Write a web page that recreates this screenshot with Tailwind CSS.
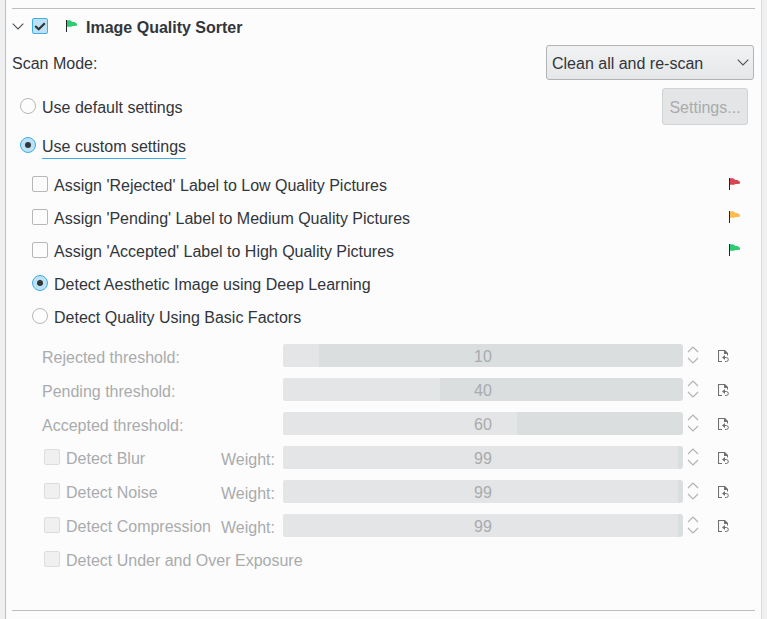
<!DOCTYPE html>
<html lang="en">
<head>
<meta charset="utf-8">
<title>Image Quality Sorter</title>
<script src="https://cdn.jsdelivr.net/npm/@tailwindcss/browser@4"></script>
</head>
<body class="h-[619px] w-[767px] overflow-hidden bg-[#eff0f1] pl-[5px] font-['Liberation_Sans',Arial,sans-serif] text-[16px] leading-[20px] text-[#31363b]">
<svg class="hidden">
  <symbol id="flag" viewBox="0 0 12 12"><path d="M1 .3h3L6.500 2H8.500L11 3.800V5.500L9 6H6.500L5 6.800H1z" fill="currentColor"/><path d="M0 0h1v12H0z" fill="#232629"/></symbol>
  <symbol id="spin" viewBox="0 0 12 18"><path d="M1 6L6 1l5 5M1 12l5 5 5-5" fill="none" stroke="#b0b2b3" stroke-width="1.150"/></symbol>
  <symbol id="reset" viewBox="0 0 11 12"><path d="M4 11.500H.5V.5H7" fill="none" stroke="#6e7072" stroke-width="1.100"/><path d="M6 0h1l3 3v2.500H9V4H6z" fill="#6e7072"/><path d="M7 5v5L4 7.500z" fill="#6e7072"/><path d="M6 7.500h2.300a1.900 1.900 0 0 1 0 4H7" fill="none" stroke="#6e7072"/></symbol>
  <symbol id="down" viewBox="0 0 12 7"><path d="M.7.7L6 6 11.300.7" fill="none" stroke="#4d5257" stroke-width="1.100"/></symbol>
</svg>
<main class="flex h-full w-[757px] flex-col border-x border-l-[#93cee9] border-r-[#d9dadc] bg-[#fcfcfc] pl-[6px] pr-[6px] pt-[8px]">
  <hr class="border-t border-[#bdbebf]">
  <header class="flex h-[35px] items-center">
    <svg class="h-[7px] w-[12px]"><use href="#down"/></svg>
    <span class="-mt-px ml-[8px] flex size-[16px] items-center justify-center rounded-[2px] border border-[#3daee9] bg-[#bee2f5]"><svg class="h-[9px] w-[12px] shrink-0" viewBox="0 0 12 9"><path d="M1.200 4L4.700 7.300 10.800 1.200" fill="none" stroke="#31363b" stroke-width="2.200"/></svg></span>
    <svg class="-mt-[2px] ml-[18px] size-[12px] text-[#2ecc71]"><use href="#flag"/></svg>
    <h1 class="ml-[8px] pt-[2px] font-bold">Image Quality Sorter</h1>
  </header>
  <div class="flex h-[37px] items-center justify-between">
    <span class="pt-[2px]">Scan Mode:</span>
    <div class="mr-[1px] flex h-[35px] w-[208px] items-center justify-between rounded-[3px] border border-[#b1b3b4] bg-linear-to-b from-[#f1f2f3] to-[#e6e7e8] pl-[5px] pr-[4px]"><span class="pt-[2px]">Clean all and re-scan</span><svg class="h-[7px] w-[12px]"><use href="#down"/></svg></div>
  </div>
  <div class="flex h-[51px] items-center pl-[8px] pr-[7px]">
    <span class="-mt-px size-[16px] rounded-full border border-[#b5b7b8]"></span><span class="ml-[6px] pt-[2px]">Use default settings</span>
    <div class="ml-auto flex h-[37px] w-[86px] items-center justify-center rounded-[3px] border border-[#d0d2d3] bg-[#e3e5e6] pt-[2px] text-[#a9abad]">Settings...</div>
  </div>
  <div class="flex h-[36px] items-start pl-[8px] pt-[4px]">
    <span class="mt-[1px] flex size-[16px] items-center justify-center rounded-full border border-[#3daee9] bg-[#bee2f5]"><i class="size-[6px] rounded-full bg-[#31363b]"></i></span><span class="ml-[6px] h-[23px] border-b border-[#3daee9] pt-px">Use custom settings</span>
  </div>
  <div class="flex h-[33px] items-center pl-[20px] pr-[14px]"><span class="-mt-px size-[16px] rounded-[2px] border border-[#b5b7b8]"></span><span class="ml-[6px] pt-[2px] tracking-[-0.01px]">Assign 'Rejected' Label to Low Quality Pictures</span><svg class="-mt-[2px] ml-auto size-[12px] text-[#da4453]"><use href="#flag"/></svg></div>
  <div class="flex h-[33px] items-center pl-[20px] pr-[14px]"><span class="-mt-px size-[16px] rounded-[2px] border border-[#b5b7b8]"></span><span class="ml-[6px] pt-[2px] tracking-[-0.01px]">Assign 'Pending' Label to Medium Quality Pictures</span><svg class="-mt-[2px] ml-auto size-[12px] text-[#fdbc4b]"><use href="#flag"/></svg></div>
  <div class="flex h-[33px] items-center pl-[20px] pr-[14px]"><span class="-mt-px size-[16px] rounded-[2px] border border-[#b5b7b8]"></span><span class="ml-[6px] pt-[2px] tracking-[-0.01px]">Assign 'Accepted' Label to High Quality Pictures</span><svg class="-mt-[2px] ml-auto size-[12px] text-[#2ecc71]"><use href="#flag"/></svg></div>
  <div class="flex h-[33px] items-center pl-[20px]"><span class="-mt-px flex size-[16px] items-center justify-center rounded-full border border-[#3daee9] bg-[#bee2f5]"><i class="size-[6px] rounded-full bg-[#31363b]"></i></span><span class="ml-[6px] pt-[2px]">Detect Aesthetic Image using Deep Learning</span></div>
  <div class="flex h-[33px] items-center pl-[20px]"><span class="-mt-px size-[16px] rounded-full border border-[#b5b7b8]"></span><span class="ml-[6px] pt-[2px]">Detect Quality Using Basic Factors</span></div>
  <section id="factors" class="mt-[5px] flex flex-col text-[#a9abad]"></section>
  <hr class="mt-[34px] border-t border-[#bdbebf]">
</main>
<script>
const rows = [
  ["Rejected threshold:", 10, 36, false],
  ["Pending threshold:", 40, 157, false],
  ["Accepted threshold:", 60, 234, false],
  ["Detect Blur", 99, 395, true],
  ["Detect Noise", 99, 395, true],
  ["Detect Compression", 99, 395, true]
];
const box = '<span class="size-[16px] shrink-0 rounded-[2px] border border-[#dcddde] bg-[#f0f0f0] -mt-px mr-[6px]"></span>';
document.getElementById("factors").innerHTML = rows.map(([label, value, fill, weighted]) => `
  <div class="flex h-[34px] items-start">
    <div class="flex h-[34px] w-[271px] shrink-0 items-center ${weighted ? "pl-[32px]" : "pl-[30px] pt-[3px]"}">${weighted ? box : ""}<span class="whitespace-nowrap ${weighted ? "pt-[4px]" : "pt-[2px]"}">${label}</span>${weighted ? '<span class="ml-auto mr-[8px] pt-[6px]">Weight:</span>' : ""}</div>
    <div class="relative mt-[6px] h-[23px] w-[400px] shrink-0 overflow-hidden rounded-[3px] bg-[#dadedf]">
      <div class="h-full bg-[#e3e5e6]" style="width:${fill}px"></div>
      <span class="absolute inset-0 flex items-center justify-center pt-[3px]">${value}</span>
    </div>
    <svg class="ml-[4px] mt-[8px] h-[18px] w-[12px]"><use href="#spin"/></svg>
    <svg class="ml-[19px] mt-[12px] h-[12px] w-[11px]"><use href="#reset"/></svg>
  </div>`).join("") + `<div class="flex h-[34px] items-center pl-[32px]">${box}<span class="pt-[4px]">Detect Under and Over Exposure</span></div>`;
</script>
</body>
</html>
